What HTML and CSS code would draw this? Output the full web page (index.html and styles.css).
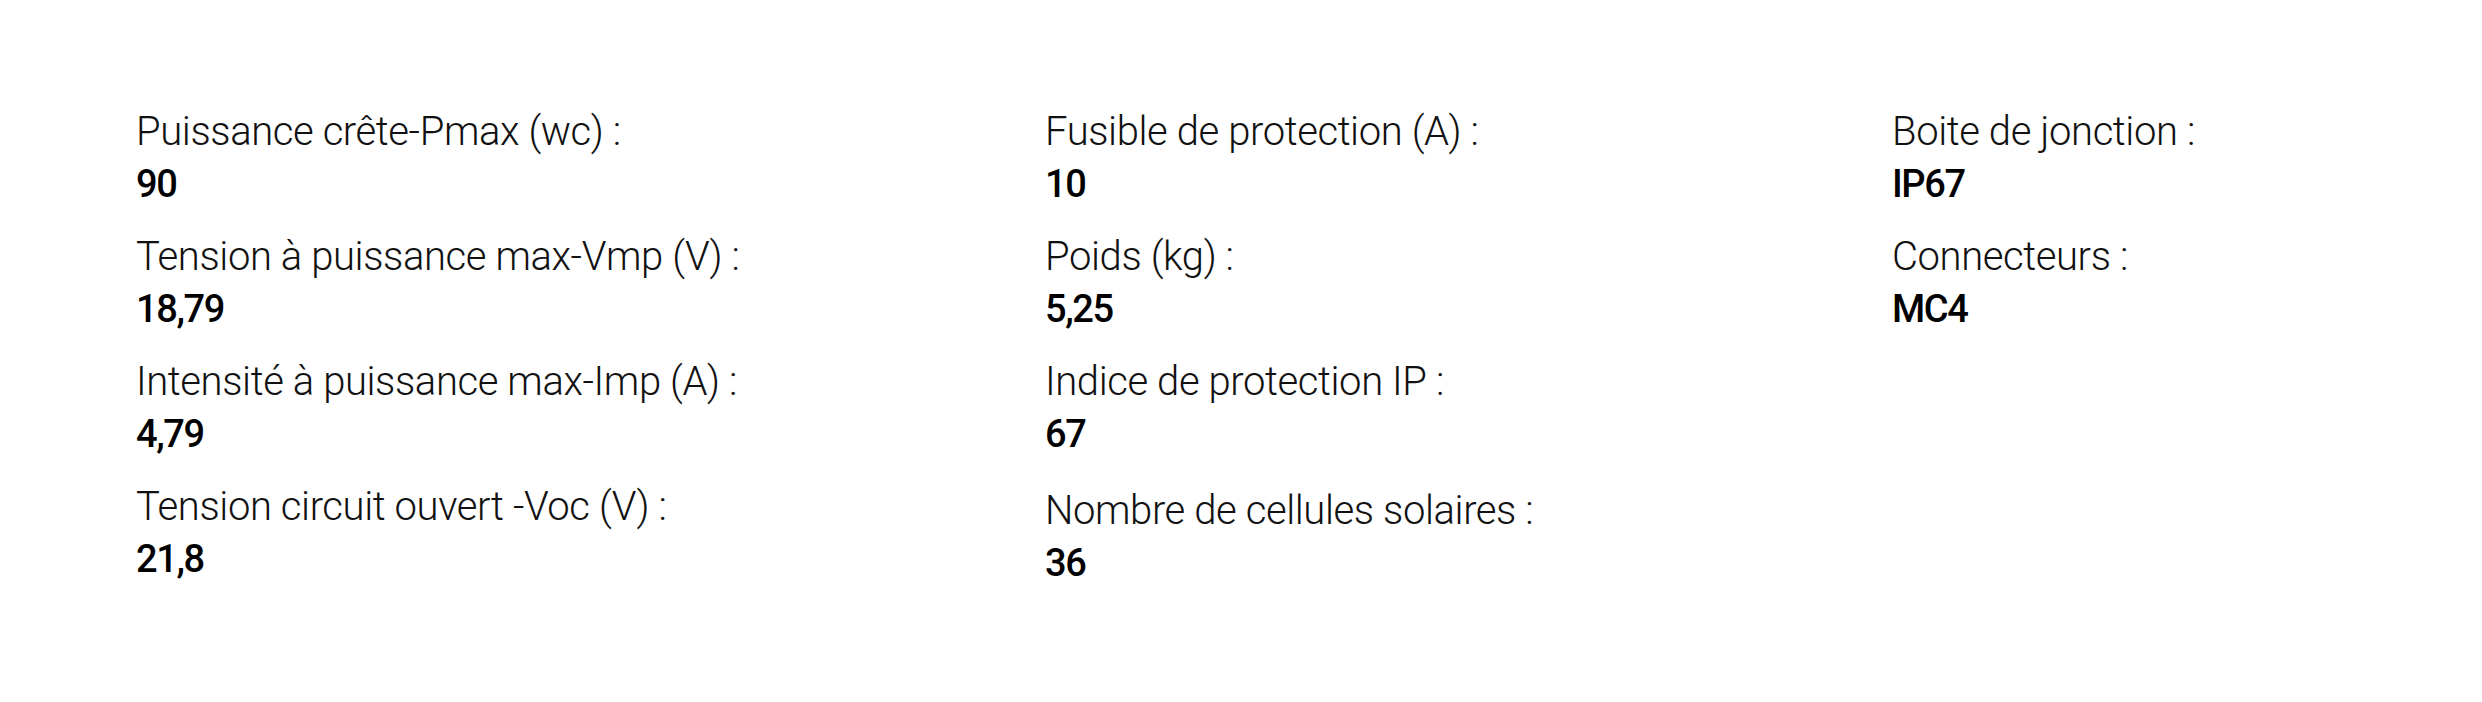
FILE: index.html
```html
<!DOCTYPE html>
<html lang="fr">
<head>
<meta charset="utf-8">
<title>Caractéristiques</title>
<link rel="stylesheet" href="styles.css">
</head>
<body>
<section class="specs">
  <div class="col col-1">
    <div class="item"><div class="label">Puissance crête-Pmax (wc) :</div><div class="value">90</div></div>
    <div class="item"><div class="label">Tension à puissance max-Vmp (V) :</div><div class="value">18,79</div></div>
    <div class="item"><div class="label">Intensité à puissance max-Imp (A) :</div><div class="value">4,79</div></div>
    <div class="item"><div class="label">Tension circuit ouvert -Voc (V) :</div><div class="value">21,8</div></div>
  </div>
  <div class="col col-2">
    <div class="item"><div class="label">Fusible de protection (A) :</div><div class="value">10</div></div>
    <div class="item"><div class="label">Poids (kg) :</div><div class="value">5,25</div></div>
    <div class="item"><div class="label">Indice de protection IP :</div><div class="value">67</div></div>
    <div class="item item-spaced"><div class="label">Nombre de cellules solaires :</div><div class="value">36</div></div>
  </div>
  <div class="col col-3">
    <div class="item"><div class="label">Boite de jonction :</div><div class="value">IP67</div></div>
    <div class="item"><div class="label">Connecteurs :</div><div class="value">MC4</div></div>
  </div>
</section>
</body>
</html>
```

FILE: styles.css
```css
html, body {
  margin: 0;
  padding: 0;
  background: #ffffff;
}

body {
  width: 2482px;
  height: 702px;
  font-family: Roboto, "Liberation Sans", Arial, sans-serif;
  color: #000;
}

.specs {
  display: grid;
  grid-template-columns: 909px 847px auto;
  padding: 106px 0 0 136px;
  box-sizing: border-box;
}

.col {
  display: flex;
  flex-direction: column;
  gap: 21px;
}

.item {
  display: flex;
  flex-direction: column;
}

.item-spaced {
  margin-top: 4px;
}

.label {
  font-size: 40px;
  line-height: 52px;
  font-weight: 300;
  color: #111;
  letter-spacing: -0.4px;
  white-space: nowrap;
}

.value {
  font-size: 38px;
  line-height: 52px;
  font-weight: 500;
  color: #000;
  letter-spacing: -1.4px;
}
```
